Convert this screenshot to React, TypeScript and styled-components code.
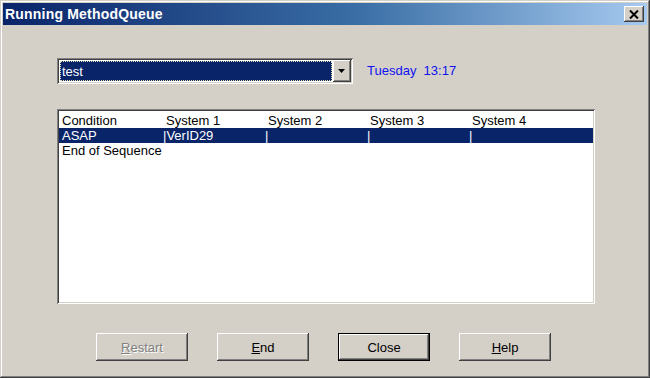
import { FC } from 'react';
import styled, { createGlobalStyle, css } from 'styled-components';

const GlobalStyle = createGlobalStyle`
  html, body {
    margin: 0;
    padding: 0;
    background: #d4d0c8;
  }
`;

const face = '#d4d0c8';
const uiFont = `"Liberation Sans", Arial, sans-serif`;

const raised = css`
  box-shadow:
    inset -1px -1px #404040,
    inset 1px 1px #ffffff,
    inset -2px -2px #808080,
    inset 2px 2px ${face};
`;

const sunken = css`
  box-shadow:
    inset 1px 1px #808080,
    inset -1px -1px #ffffff,
    inset 2px 2px #404040,
    inset -2px -2px ${face};
`;

const Window = styled.div`
  box-sizing: border-box;
  width: 650px;
  height: 378px;
  padding: 3px;
  background: ${face};
  font-family: ${uiFont};
  font-size: 13px;
  color: #000;
  display: flex;
  flex-direction: column;
  box-shadow:
    inset -1px -1px #404040,
    inset 1px 1px ${face},
    inset -2px -2px #808080,
    inset 2px 2px #ffffff;
`;

const TitleBar = styled.div`
  height: 22px;
  display: flex;
  align-items: center;
  justify-content: space-between;
  padding: 0 3px 0 2px;
  background: linear-gradient(90deg, #0a246a 0%, #3a6ea5 55%, #a6caf0 100%);
`;

const Title = styled.span`
  color: #fff;
  font-weight: bold;
  font-size: 14px;
  letter-spacing: 0.2px;
`;

const CloseButton = styled.div`
  width: 20px;
  height: 16px;
  background: ${face};
  ${raised};
  display: flex;
  align-items: center;
  justify-content: center;
`;

const Content = styled.div`
  flex: 1;
  display: flex;
  flex-direction: column;
  padding: 33px 0 0 54px;
`;

const ComboRow = styled.div`
  display: flex;
  align-items: center;
  gap: 14px;
`;

const Combo = styled.div`
  box-sizing: border-box;
  width: 296px;
  height: 26px;
  padding: 3px;
  background: #fff;
  ${sunken};
  display: flex;
`;

const ComboValue = styled.div`
  flex: 1;
  background: #0a246a;
  color: #fff;
  outline: 1px dotted #e6e2b8;
  outline-offset: -1px;
  display: flex;
  align-items: center;
  padding-left: 2px;
  margin-right: 1px;
`;

const ArrowButton = styled.div`
  width: 18px;
  background: ${face};
  ${raised};
  display: flex;
  align-items: center;
  justify-content: center;
  margin: -1px -1px -1px 0;
`;

const Clock = styled.span`
  color: #1010f0;
  font-size: 13px;
  padding-bottom: 1px;
`;

const ListBox = styled.div`
  box-sizing: border-box;
  width: 538px;
  height: 195px;
  margin-top: 25px;
  padding: 4px 2px 2px 2px;
  background: #fff;
  ${sunken};
`;

const Row = styled.div<{ $selected?: boolean }>`
  display: grid;
  grid-template-columns: 101px 102px 102px 102px 1fr;
  height: 15px;
  line-height: 15px;
  padding-left: 3px;
  white-space: nowrap;
  background: ${({ $selected }) => ($selected ? '#0a246a' : 'transparent')};
  color: ${({ $selected }) => ($selected ? '#fff' : '#000')};
`;

const Cell = styled.span<{ $shift?: boolean }>`
  padding-left: ${({ $shift }) => ($shift ? '3px' : '0')};
`;

const ButtonRow = styled.div`
  display: flex;
  gap: 29px;
  margin-top: 29px;
  padding-left: 39px;
`;

const Button = styled.div<{ $default?: boolean; $disabled?: boolean }>`
  box-sizing: border-box;
  width: 92px;
  height: 28px;
  display: flex;
  align-items: center;
  justify-content: center;
  background: ${face};
  ${({ $default }) =>
    $default
      ? css`
          box-shadow:
            inset 0 0 0 1px #000,
            inset -2px -2px #404040,
            inset 2px 2px #ffffff,
            inset -3px -3px #808080;
        `
      : raised};
  color: ${({ $disabled }) => ($disabled ? '#808080' : '#000')};
  text-shadow: ${({ $disabled }) => ($disabled ? '1px 1px 0 #fff' : 'none')};
`;

const Key = styled.span`
  text-decoration: underline;
`;

const columns = ['Condition', 'System 1', 'System 2', 'System 3', 'System 4'];

const App: FC = () => {
  return (
    <>
      <GlobalStyle />
      <Window>
        <TitleBar>
          <Title>Running MethodQueue</Title>
          <CloseButton>
            <svg width="10" height="9" viewBox="0 0 10 9">
              <path d="M1 0.5 L9 8.5 M9 0.5 L1 8.5" stroke="#000" strokeWidth="2" />
            </svg>
          </CloseButton>
        </TitleBar>
        <Content>
          <ComboRow>
            <Combo>
              <ComboValue>test</ComboValue>
              <ArrowButton>
                <svg width="8" height="4" viewBox="0 0 8 4">
                  <path d="M0 0 H7 L3.5 4 Z" fill="#000" />
                </svg>
              </ArrowButton>
            </Combo>
            <Clock>Tuesday&nbsp; 13:17</Clock>
          </ComboRow>
          <ListBox>
            <Row>
              {columns.map((c, i) => (
                <Cell key={c} $shift={i > 0}>
                  {c}
                </Cell>
              ))}
            </Row>
            <Row $selected>
              <Cell>ASAP</Cell>
              <Cell>|VerID29</Cell>
              <Cell>|</Cell>
              <Cell>|</Cell>
              <Cell>|</Cell>
            </Row>
            <Row>
              <Cell>End of Sequence</Cell>
            </Row>
          </ListBox>
          <ButtonRow>
            <Button $disabled>
              <span>
                <Key>R</Key>estart
              </span>
            </Button>
            <Button>
              <span>
                <Key>E</Key>nd
              </span>
            </Button>
            <Button $default>Close</Button>
            <Button>
              <span>
                <Key>H</Key>elp
              </span>
            </Button>
          </ButtonRow>
        </Content>
      </Window>
    </>
  );
};

export default App;
